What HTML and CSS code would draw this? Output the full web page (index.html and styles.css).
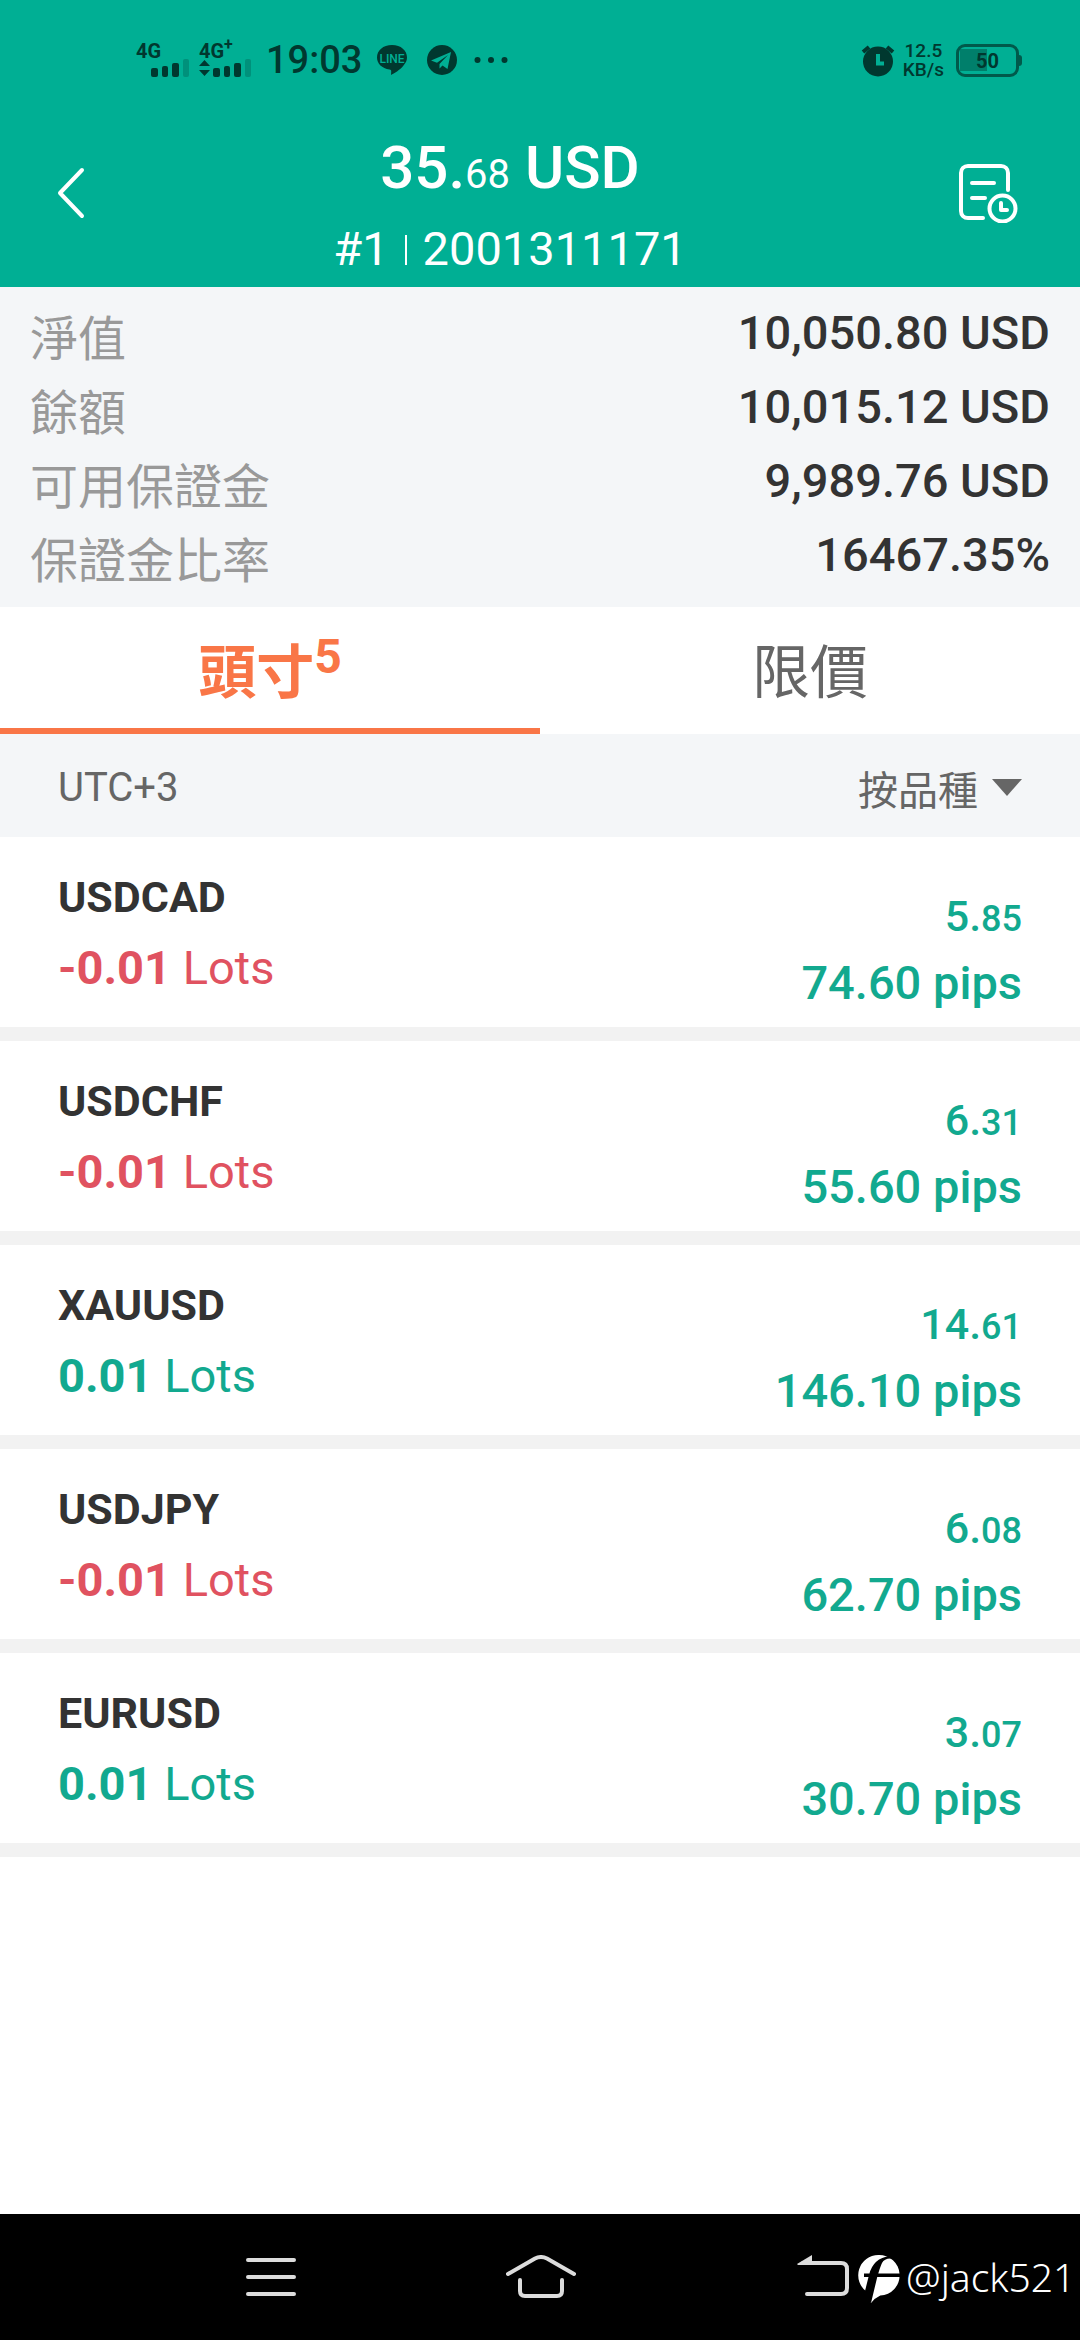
FILE: index.html
```html
<!DOCTYPE html>
<html lang="zh-Hant">
<head>
<meta charset="utf-8">
<meta name="viewport" content="width=device-width, initial-scale=1">
<title>頭寸</title>
<link rel="stylesheet" href="styles.css">
</head>
<body>
<header class="header">
  <div class="status">
    <div class="signal">
      <span class="signal-label">4G</span>
      <svg class="signal-bars" width="54" height="18" viewBox="0 0 54 18"><rect x="15" y="9" width="7" height="9" rx="2"/><rect x="26" y="7" width="6" height="11" rx="2"/><rect x="36" y="4" width="7" height="14" rx="2"/><rect x="47" y="0" width="6" height="18" rx="2" opacity=".25"/></svg>
    </div>
    <div class="signal">
      <span class="signal-label">4G<sup class="signal-plus">+</sup></span>
      <svg class="signal-bars" width="54" height="18" viewBox="0 0 54 18"><path d="M0 7 5.500 1 11 7zM0 11h11L5.500 17z"/><rect x="14" y="9" width="7" height="9" rx="2"/><rect x="25" y="7" width="6" height="11" rx="2"/><rect x="35" y="4" width="7" height="14" rx="2"/><rect x="46" y="0" width="6" height="18" rx="2" opacity=".25"/></svg>
    </div>
    <time class="clock">19:03</time>
    <svg class="line-app" width="32" height="32" viewBox="0 0 32 32"><path d="M16 1C7 1 1 6.500 1 13.500c0 6 5 11 12.500 12 1.500.3 1.800.8 1.700 2.200l-.2 3.300c3-1.500 9-5 12.500-9.500 2.200-2.500 3.500-5 3.500-8C31 6.500 25 1 16 1z"/><text class="line-word" x="16" y="19" text-anchor="middle">LINE</text></svg>
    <svg class="telegram" width="32" height="32" viewBox="0 0 32 32"><circle cx="16" cy="16" r="15"/><path class="cutout" d="M25 8 5 16.500l6 2.300L22 11 13.500 20v4.500l3-3 5 3.500z"/></svg>
    <svg width="34" height="32" viewBox="0 0 34 32"><circle cx="3.500" cy="16" r="3"/><circle cx="17" cy="16" r="3"/><circle cx="30.500" cy="16" r="3"/></svg>
    <div class="status-end">
      <svg width="34" height="34" viewBox="0 0 34 34"><circle cx="17" cy="18.500" r="15"/><path class="alarm-bell" d="M2 9 8 4M26 4l6 5"/><path class="alarm-hand" d="M17 11v9.500h6"/></svg>
      <div class="speed"><span>12.5</span><span>KB/s</span></div>
      <div class="battery">50</div>
    </div>
  </div>
  <div class="titlebar">
    <button class="icon-button" aria-label="返回"><svg width="30" height="52" viewBox="0 0 30 52"><path class="stroke" d="M26 3 4 26 26 49"/></svg></button>
    <div class="title">
      <h1 class="profit">35.<small class="profit-cents">68</small> USD</h1>
      <p class="account">#1<i class="account-rule"></i>2001311171</p>
    </div>
    <button class="icon-button" aria-label="歷史記錄"><svg width="60" height="60" viewBox="0 0 60 60"><path class="stroke" d="M50 27V10c0-4-3-7-7-7H10c-4 0-7 3-7 7v38c0 4 3 7 7 7h15M14 20h22M14 35h13"/><circle class="stroke" cx="44.500" cy="45.500" r="13"/><path class="stroke" d="M43 40v7h6"/></svg></button>
  </div>
</header>

<main class="main">
  <dl class="summary">
    <div class="summary-row"><dt>淨值</dt><dd>10,050.80 USD</dd></div>
    <div class="summary-row"><dt>餘額</dt><dd>10,015.12 USD</dd></div>
    <div class="summary-row"><dt>可用保證金</dt><dd>9,989.76 USD</dd></div>
    <div class="summary-row"><dt>保證金比率</dt><dd>16467.35%</dd></div>
  </dl>

  <div class="tabs" role="tablist">
    <button class="tab tab-active" role="tab" aria-selected="true">頭寸<sup class="tab-count">5</sup></button>
    <button class="tab" role="tab" aria-selected="false">限價</button>
  </div>

  <div class="filter">
    <span>UTC+3</span>
    <label class="sort"><select class="sort-select" aria-label="排序"><option>按品種</option></select></label>
  </div>

  <ul class="positions">
    <li class="position">
      <div class="instrument"><h2 class="symbol">USDCAD</h2><p class="lots sell"><b>-0.01</b> Lots</p></div>
      <div class="result"><p class="gain">5.<small class="cents">85</small></p><p class="pips">74.60 pips</p></div>
    </li>
    <li class="position">
      <div class="instrument"><h2 class="symbol">USDCHF</h2><p class="lots sell"><b>-0.01</b> Lots</p></div>
      <div class="result"><p class="gain">6.<small class="cents">31</small></p><p class="pips">55.60 pips</p></div>
    </li>
    <li class="position">
      <div class="instrument"><h2 class="symbol">XAUUSD</h2><p class="lots"><b>0.01</b> Lots</p></div>
      <div class="result"><p class="gain">14.<small class="cents">61</small></p><p class="pips">146.10 pips</p></div>
    </li>
    <li class="position">
      <div class="instrument"><h2 class="symbol">USDJPY</h2><p class="lots sell"><b>-0.01</b> Lots</p></div>
      <div class="result"><p class="gain">6.<small class="cents">08</small></p><p class="pips">62.70 pips</p></div>
    </li>
    <li class="position">
      <div class="instrument"><h2 class="symbol">EURUSD</h2><p class="lots"><b>0.01</b> Lots</p></div>
      <div class="result"><p class="gain">3.<small class="cents">07</small></p><p class="pips">30.70 pips</p></div>
    </li>
  </ul>
</main>

<nav class="nav">
  <button class="nav-button nav-menu" aria-label="選單"><svg width="50" height="44" viewBox="0 0 50 44"><path d="M2 5h46M2 22h46M2 39h46"/></svg></button>
  <button class="nav-button" aria-label="主畫面"><svg width="70" height="44" viewBox="0 0 70 44"><path d="M2 19 29 3.500q6-3 12 0L68 19M14 25v11q0 5 5 5h32q5 0 5-5V25"/></svg></button>
  <button class="nav-button nav-back" aria-label="返回"><svg width="52" height="44" viewBox="0 0 52 44"><path class="nav-arrow" d="M0 9 15 0v10H1z"/><path d="M6 8h38q6 0 6 6v19q0 6-6 6H10"/></svg></button>
  <div class="watermark">
    <svg width="42" height="52" viewBox="0 0 42 52"><path class="mark-disc" d="M20.300 4a20.300 20.300 0 1 1 2 40.600Q17 47 13 52L9 41A20.300 20.300 0 0 1 20.300 4z"/><path class="mark-letter" d="M6 44 11 24Q15 7 32 5l5 3q-10-2-13 4-2 4-5 15l-6 25zM6 22.500h36v3.500H6z"/></svg>
    <span>@jack521</span>
  </div>
</nav>
</body>
</html>
```
FILE: styles.css
```css
:root {
  --green: #00af94;
  --gain: #12a98f;
  --sell: #e05260;
  --orange: #f97647;
  --ink: #333333;
  --grey: #666666;
  --panel: #f4f6f8;
  --status: #00382f;
}

* { box-sizing: border-box; }

body {
  margin: 0;
  min-height: 100vh;
  display: flex;
  flex-direction: column;
  background: #ffffff;
  color: var(--ink);
  font-family: Roboto, "Noto Sans CJK TC", sans-serif;
}

h1, h2, p, dl, dd, ul { margin: 0; padding: 0; }

button, select {
  margin: 0;
  padding: 0;
  border: 0;
  background: none;
  color: inherit;
  font: inherit;
}

svg { display: block; flex: none; }

/* Header */
.header { background: var(--green); color: #ffffff; }

.status {
  display: flex;
  align-items: center;
  height: 98px;
  padding: 22px 58px 0 136px;
  color: var(--status);
  fill: currentColor;
}

.signal { margin-right: 9px; }
.signal-label {
  display: block;
  height: 16px;
  font-size: 20px;
  line-height: 16px;
  font-weight: 700;
}
.signal-plus { font-size: 16px; line-height: 0; }

.clock {
  margin-left: 4px;
  font-size: 38px;
  line-height: 44px;
  font-weight: 500;
}
.line-app { margin: 0 18px 0 14px; }
.line-word { fill: var(--green); font-size: 12px; font-weight: 500; }
.telegram { margin-right: 16px; }
.cutout { fill: var(--green); }

.status-end {
  display: flex;
  align-items: center;
  gap: 8px;
  margin-left: auto;
}
.alarm-bell { stroke: currentColor; stroke-width: 4; }
.alarm-hand { fill: none; stroke: var(--green); stroke-width: 4; }
.speed {
  display: grid;
  justify-items: center;
  font-size: 19px;
  line-height: 19px;
  font-weight: 500;
}
.battery {
  position: relative;
  width: 63px;
  height: 33px;
  margin: 0 3px 0 4px;
  border: 3px solid #005a4b;
  border-radius: 9px;
  background: linear-gradient(#007f6b, #007f6b) 1px 2px / 27px 22px no-repeat;
  font-size: 20px;
  line-height: 28px;
  font-weight: 700;
  text-align: center;
}
.battery::after {
  content: "";
  position: absolute;
  top: 8px;
  right: -6px;
  width: 3px;
  height: 11px;
  border-radius: 0 3px 3px 0;
  background: #005a4b;
}

.titlebar {
  display: grid;
  grid-template-columns: 42px 1fr 60px;
  align-items: center;
  min-height: 189px;
  padding: 0 62px 0 56px;
}
.icon-button { width: 100%; }
.stroke {
  fill: none;
  stroke: #ffffff;
  stroke-width: 4;
  stroke-linecap: round;
  stroke-linejoin: round;
}
.title {
  display: grid;
  gap: 16px;
  align-self: end;
  padding: 0 36px 8px 0;
  text-align: center;
}
.profit { font-size: 60px; line-height: 70px; font-weight: 500; }
.profit-cents { font-size: 40px; line-height: 1; font-weight: 400; }
.account { font-size: 47px; line-height: 60px; }
.account-rule {
  display: inline-block;
  width: 2px;
  height: 30px;
  margin: 0 16px;
  background: #ffffff;
}

/* Account summary */
.summary { padding: 9px 30px 15px; background: var(--panel); }
.summary-row {
  display: flex;
  justify-content: space-between;
  height: 74px;
  line-height: 74px;
}
.summary dt {
  color: #999999;
  font-family: "Noto Sans CJK TC", sans-serif;
  font-size: 48px;
  line-height: 78px;
}
.summary dd { font-size: 47px; font-weight: 500; }

/* Tabs */
.tabs { display: grid; grid-template-columns: 1fr 1fr; }
.tab {
  height: 127px;
  border-bottom: 6px solid transparent;
  color: var(--grey);
  font-family: "Noto Sans CJK TC", sans-serif;
  font-size: 58px;
  line-height: 120px;
}
.tab-active {
  border-color: var(--orange);
  color: var(--orange);
  font-weight: 700;
}
.tab-count {
  font-family: Roboto, sans-serif;
  font-size: 48px;
  line-height: 0;
}

/* Filter bar */
.filter {
  display: flex;
  justify-content: space-between;
  align-items: center;
  height: 103px;
  padding: 4px 58px 0;
  background: var(--panel);
  color: var(--grey);
  font-size: 40px;
  line-height: 60px;
}
.sort { display: flex; align-items: center; gap: 14px; }
.sort-select { appearance: none; font-family: "Noto Sans CJK TC", sans-serif; }
.sort::after {
  content: "";
  border: 15px solid transparent;
  border-top: 17px solid var(--grey);
  border-bottom: 0;
}

/* Positions */
.positions { list-style: none; }
.position {
  display: flex;
  justify-content: space-between;
  padding: 0 58px 14px;
  border-bottom: 14px solid #f2f2f2;
  color: var(--gain);
  line-height: 60px;
}
.instrument { display: grid; align-content: start; gap: 11px; padding-top: 30px; }
.symbol { color: var(--ink); font-size: 43px; font-weight: 700; }
.lots { font-size: 47px; }
.sell { color: var(--sell); }
.result {
  display: grid;
  gap: 7px;
  padding-top: 49px;
  font-weight: 500;
  text-align: right;
}
.gain { font-size: 43px; }
.cents { font-size: 36px; line-height: 1; }
.pips { font-size: 47px; }

/* System navigation */
.nav {
  display: grid;
  grid-template-columns: 136px 1fr 1fr 173px 231px;
  height: 126px;
  margin-top: auto;
  background: #000000;
}
.nav-button {
  display: grid;
  place-items: center;
  fill: none;
  stroke: #dcdcdc;
  stroke-width: 4;
  stroke-linecap: round;
}
.nav-menu { grid-column: 2; }
.nav-back { justify-items: end; }
.nav-arrow { fill: #dcdcdc; stroke: none; }
.watermark {
  display: flex;
  align-items: center;
  gap: 6px;
  padding-left: 9px;
  color: #ffffff;
  font-family: "Noto Sans", sans-serif;
  font-size: 39px;
  font-weight: 300;
  line-height: 60px;
}
.mark-disc { fill: #ffffff; }
.mark-letter { fill: #000000; }
```
